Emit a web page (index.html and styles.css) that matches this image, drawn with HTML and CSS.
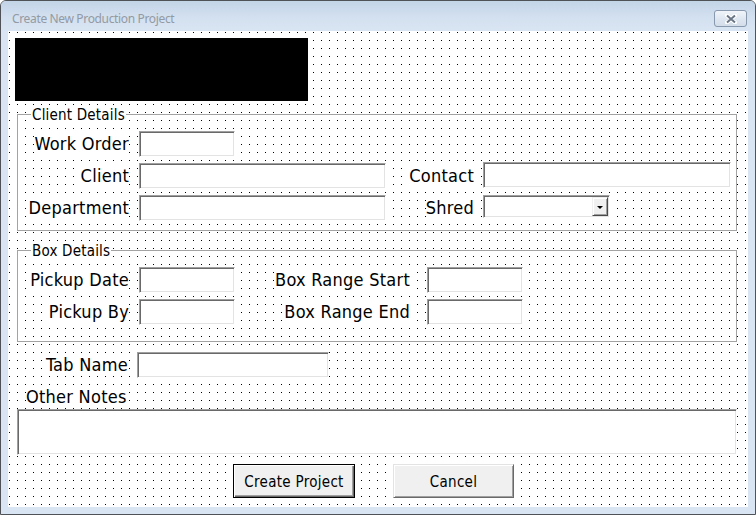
FILE: index.html
```html
<!DOCTYPE html>
<html>
<head>
<meta charset="utf-8">
<title>Create New Production Project</title>
<link rel="stylesheet" href="styles.css">
</head>
<body>
<div class="window">
  <div class="titlebar">
    <span class="title">Create New Production Project</span>
    <span class="close">
      <svg width="12" height="10" viewBox="0 0 12 10">
        <path d="M2 1.5 L10 8.5 M10 1.5 L2 8.5" stroke="#ffffff" stroke-width="4" stroke-linecap="round"/>
        <path d="M2 1.5 L10 8.5 M10 1.5 L2 8.5" stroke="#6a7685" stroke-width="2"/>
      </svg>
    </span>
  </div>
  <div class="client">
    <div class="logo"></div>

    <div class="frame frame-client">
      <span class="caption">Client Details</span>
      <div class="grid grid-client">
        <span class="lbl">Work Order</span>
        <span class="tb tb-short"></span>
        <span></span>
        <span></span>

        <span class="lbl">Client</span>
        <span class="tb tb-client"></span>
        <span class="lbl lbl-r">Contact</span>
        <span class="tb tb-contact"></span>

        <span class="lbl">Department</span>
        <span class="tb tb-client"></span>
        <span class="lbl lbl-r">Shred</span>
        <span class="combo"><span class="combo-field"></span><span class="drop"><span class="arrow"></span></span></span>
      </div>
    </div>

    <div class="frame frame-box">
      <span class="caption">Box Details</span>
      <div class="grid grid-box">
        <span class="lbl">Pickup Date</span>
        <span class="tb tb-short"></span>
        <span class="lbl lbl-box">Box Range Start</span>
        <span class="tb tb-short"></span>

        <span class="lbl">Pickup By</span>
        <span class="tb tb-short"></span>
        <span class="lbl lbl-box">Box Range End</span>
        <span class="tb tb-short"></span>
      </div>
    </div>

    <div class="tab-row">
      <span class="tab-label"><span class="lbl">Tab Name</span></span>
      <span class="tb tb-tab"></span>
    </div>

    <div class="notes-label"><span class="lbl">Other Notes</span></div>
    <div class="tb tb-notes"></div>

    <div class="buttons">
      <span class="btn btn-default">Create Project</span>
      <span class="btn">Cancel</span>
    </div>
  </div>
</div>
</body>
</html>
```

FILE: styles.css
```css
html, body {
  margin: 0;
  padding: 0;
  background: #ffffff;
}

.window {
  width: 756px;
  height: 515px;
  box-sizing: border-box;
  border: 1px solid #4f5358;
  border-radius: 6px 6px 0 0;
  background: #d9e5f3;
  display: flex;
  flex-direction: column;
  overflow: hidden;
}

.titlebar {
  height: 30px;
  flex: 0 0 30px;
  box-sizing: border-box;
  padding: 10px 8px 0 11px;
  display: flex;
  justify-content: space-between;
  align-items: flex-start;
  background: linear-gradient(#c3d4e8, #d3e0ef 55%, #d9e5f3);
}

.title {
  font-family: "Noto Sans", "Open Sans", sans-serif;
  font-size: 12px;
  line-height: 16px;
  color: #929aa4;
  letter-spacing: -0.35px;
}

.close {
  margin-top: -1px;
  width: 31px;
  height: 15px;
  border: 1px solid #8898ad;
  border-radius: 3px;
  background: linear-gradient(#f1f5fa, #dfe7f1 50%, #d3dde9);
  display: flex;
  align-items: center;
  justify-content: center;
}

.client {
  width: 740px;
  height: 476px;
  margin: 0 7px 7px;
  box-sizing: border-box;
  padding: 7px 0 0 0;
  background-color: #ffffff;
  background-image:
    linear-gradient(to right, transparent 1px, #ffffff 1px),
    linear-gradient(to bottom, #000000 1px, #ffffff 1px);
  background-size: 8px 8px, 8px 8px;
  background-position: 1px 1px, 1px 1px;
  font-family: "DejaVu Sans Condensed", "DejaVu Sans", sans-serif;
  font-stretch: condensed;
  color: #000;
  display: flex;
  flex-direction: column;
  align-items: flex-start;
}

.logo {
  width: 293px;
  height: 63px;
  margin-left: 7px;
  background: #000;
}

.frame {
  margin-left: 9px;
  width: 720px;
  box-sizing: border-box;
  border: 1px solid #a3a3a3;
  display: flex;
  flex-direction: column;
  align-items: flex-start;
}

.frame-client {
  margin-top: 13px;
  height: 117px;
}

.frame-box {
  margin-top: 19px;
  height: 92px;
}

.caption {
  margin: -9px 0 7px 13px;
  padding: 0 1px;
  background: #fff;
  font-size: 15px;
  line-height: 18px;
  letter-spacing: 0.2px;
}

.grid {
  display: grid;
  row-gap: 6px;
}

.grid-client {
  grid-template-columns: 121px 246px 98px 247px;
  grid-template-rows: 26px 26px 26px;
}

.grid-box {
  grid-template-columns: 121px 96px 192px 96px;
  grid-template-rows: 26px 26px;
}

.lbl {
  background: #fff;
  font-size: 18px;
  line-height: 20px;
  letter-spacing: 0.25px;
  white-space: nowrap;
}

.grid .lbl {
  justify-self: end;
  align-self: center;
  margin: 0 10px 1px 0;
}

.grid .lbl-r {
  margin-right: 9px;
}

.grid .lbl-box {
  margin-right: 17px;
}

.tb {
  display: block;
  box-sizing: border-box;
  height: 26px;
  background: #fff;
  border: 1px solid;
  border-color: #a0a0a0 #ffffff #ffffff #a0a0a0;
  box-shadow: inset 1px 1px 0 #696969, inset -1px -1px 0 #e3e3e3;
}

.tb-short {
  width: 96px;
}

.tb-client {
  width: 247px;
}

.tb-contact {
  width: 248px;
}

.grid-client .tb-contact {
  margin-top: -1px;
}

.combo {
  width: 127px;
  height: 23px;
  box-sizing: border-box;
  background: #fff;
  border: 1px solid;
  border-color: #a0a0a0 #ffffff #ffffff #a0a0a0;
  box-shadow: inset 1px 1px 0 #696969, inset -1px -1px 0 #e3e3e3;
  padding: 1px 1px 1px 1px;
  display: flex;
}

.combo-field {
  flex: 1;
}

.drop {
  width: 16px;
  box-sizing: border-box;
  background: #f0f0f0;
  border: 1px solid;
  border-color: #f0f0f0 #4a4a4a #4a4a4a #f0f0f0;
  box-shadow: inset 1px 1px 0 #ffffff, inset -1px -1px 0 #a0a0a0;
  display: flex;
  align-items: center;
  justify-content: center;
}

.arrow {
  width: 0;
  height: 0;
  border-left: 3px solid transparent;
  border-right: 3px solid transparent;
  border-top: 3px solid #000;
  margin-top: 1px;
}

.tab-row {
  margin-top: 10px;
  display: flex;
  align-items: center;
}

.tab-label {
  width: 120px;
  display: flex;
  justify-content: flex-end;
  margin-right: 9px;
}

.tab-label .lbl {
  margin-bottom: 1px;
}

.tb-tab {
  width: 192px;
  height: 26px;
}

.notes-label {
  margin: 9px 0 0 18px;
  height: 22px;
  display: flex;
  align-items: flex-start;
}

.notes-label .lbl {
  line-height: 20px;
}

.tb-notes {
  margin: 0 0 0 9px;
  width: 720px;
  height: 46px;
}

.buttons {
  margin: 9px 0 0 225px;
  display: flex;
  gap: 38px;
}

.btn {
  width: 121px;
  height: 34px;
  box-sizing: border-box;
  padding-top: 2px;
  background: #f0f0f0;
  border: 1px solid;
  border-color: #e3e3e3 #696969 #696969 #e3e3e3;
  box-shadow: inset 1px 1px 0 #ffffff, inset -1px -1px 0 #a0a0a0;
  font-size: 15px;
  line-height: 18px;
  letter-spacing: 0.3px;
  display: flex;
  align-items: center;
  justify-content: center;
  white-space: nowrap;
}

.btn-default {
  width: 122px;
  border-color: #000;
  box-shadow: inset 1px 1px 0 #ffffff, inset -1px -1px 0 #696969, inset -2px -2px 0 #a0a0a0;
}
```
